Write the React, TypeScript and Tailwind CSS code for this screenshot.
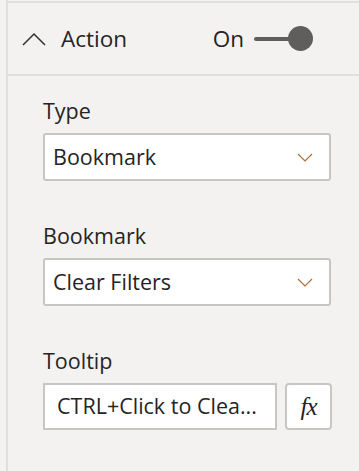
const FONT = { fontFamily: '"Open Sans", "Noto Sans", sans-serif' };

const ChevronDown = () => (
  <svg width="16" height="9" viewBox="0 0 16 9" fill="none">
    <path d="M1 1l7 7 7-7" stroke="#a8703e" strokeWidth="1.2" />
  </svg>
);

const Select = ({ value }: { value: string }) => (
  <div className="flex items-center justify-between h-[48px] w-[288px] bg-white border-2 border-[#c8c6c4] rounded-[3px] pl-[8px] pr-[16px]">
    <span className="text-[21.5px] text-[#252423]">{value}</span>
    <ChevronDown />
  </div>
);

const Field = ({ label, children }: { label: string; children: React.ReactNode }) => (
  <div className="flex flex-col">
    <div className="text-[21.5px] text-[#252423] leading-[26px] mb-[9px]">{label}</div>
    {children}
  </div>
);

export default function App() {
  return (
    <div className="w-[359px] h-[471px] bg-[#f3f2f1] flex overflow-hidden" style={FONT}>
      <div className="w-[6px] shrink-0" />
      <div className="w-[2px] shrink-0 bg-[#e1dfdd]" />
      <div className="flex-1 flex flex-col pt-[1px]">
        <div className="h-[2px] bg-[#e1dfdd]" />
        <div className="h-[71px] flex items-center pl-[14px] pr-[46px]">
          <svg width="24" height="14" viewBox="0 0 24 14" fill="none">
            <path d="M1 13L12 2l11 11" stroke="#323130" strokeWidth="1.5" />
          </svg>
          <span className="ml-[15px] text-[22.5px] text-[#252423]">Action</span>
          <div className="ml-auto flex items-center">
            <span className="text-[22.5px] text-[#252423]">On</span>
            <div className="ml-[10px] flex items-center">
              <div className="w-[38px] h-[4px] bg-[#605e5c] rounded-full" />
              <div className="w-[25px] h-[25px] -ml-[4px] rounded-full bg-[#605e5c]" />
            </div>
          </div>
        </div>
        <div className="h-[2px] bg-[#e1dfdd]" />
        <div className="flex flex-col pl-[35px] pt-[22px] gap-[42px]">
          <Field label="Type">
            <Select value="Bookmark" />
          </Field>
          <Field label="Bookmark">
            <Select value="Clear Filters" />
          </Field>
          <Field label="Tooltip">
            <div className="flex items-center gap-[8px]">
              <div className="h-[47px] w-[234px] bg-white border-2 border-[#c8c6c4] flex items-center pl-[12px] overflow-hidden">
                <span className="text-[21.5px] text-[#252423] whitespace-nowrap">CTRL+Click to Clea...</span>
              </div>
              <div className="h-[47px] w-[47px] bg-white border-2 border-[#c8c6c4] rounded-[4px] flex items-center justify-center">
                <span
                  className="text-[25px] italic text-[#252423] tracking-[-1px]"
                  style={{ fontFamily: '"Liberation Serif", serif' }}
                >
                  fx
                </span>
              </div>
            </div>
          </Field>
        </div>
      </div>
    </div>
  );
}
